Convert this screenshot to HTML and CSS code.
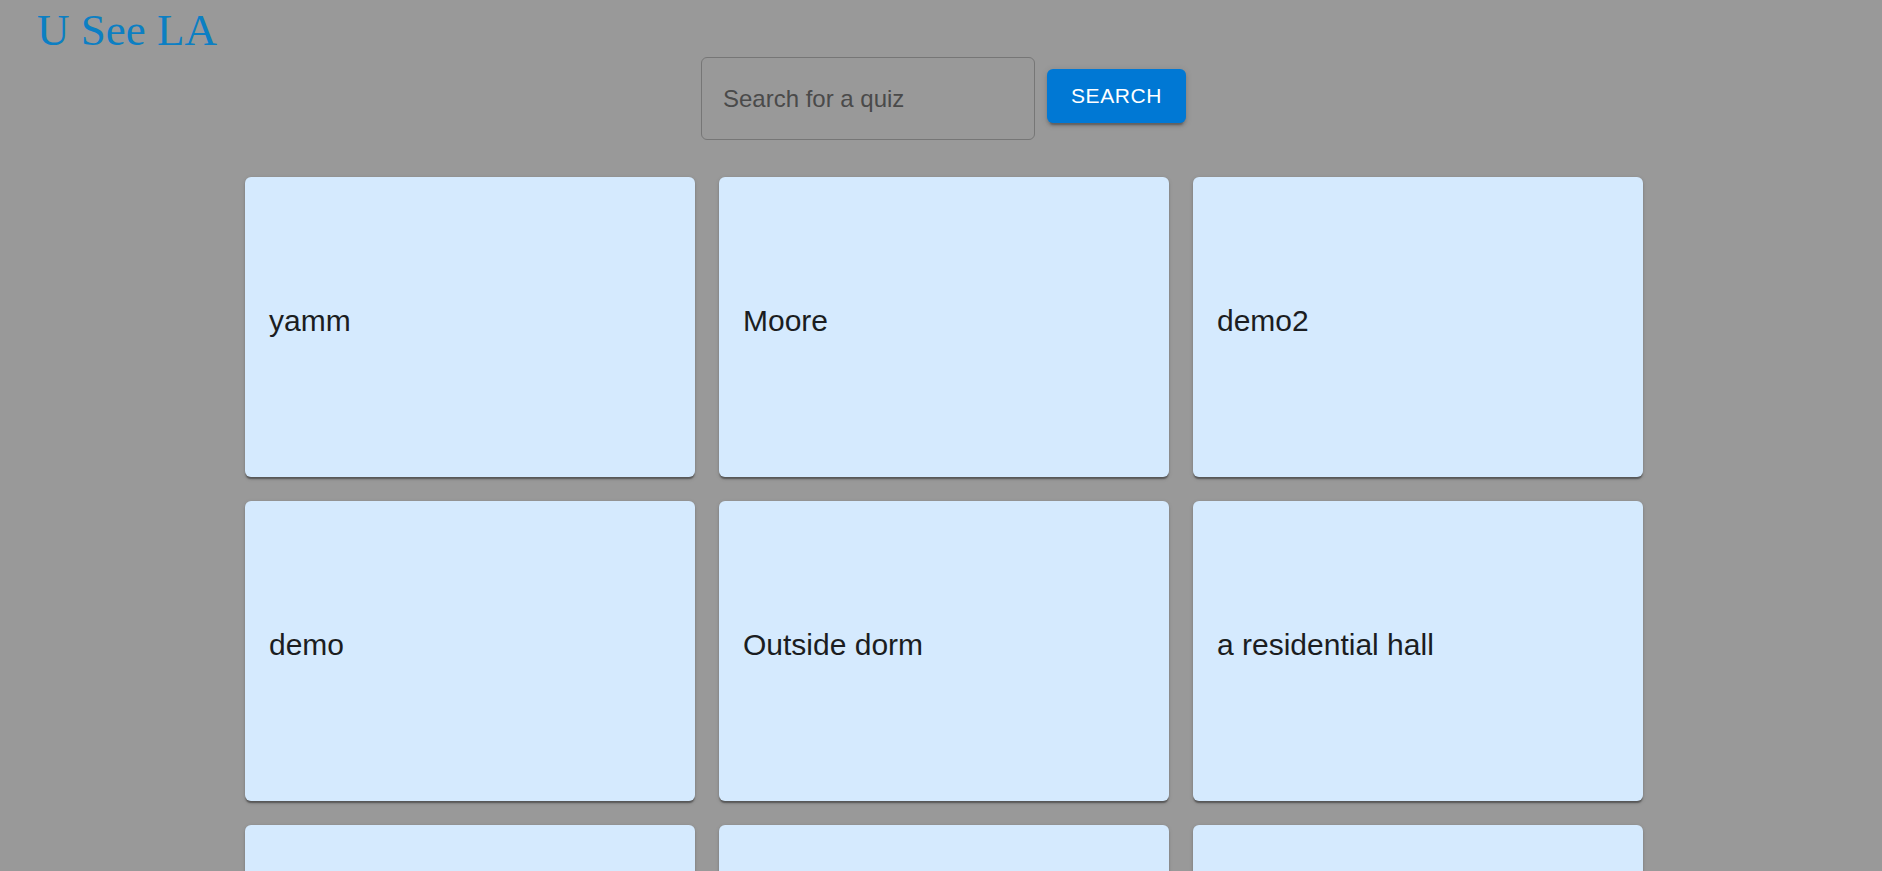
FILE: index.html
```html
<!DOCTYPE html>
<html lang="en">
<head>
<meta charset="utf-8">
<title>U See LA</title>
<link rel="stylesheet" href="styles.css">
</head>
<body>
<header class="header">
  <h1 class="brand">U See LA</h1>
</header>
<main class="main">
  <form class="search-row" onsubmit="return false;">
    <input class="search-input" type="text" placeholder="Search for a quiz">
    <button class="search-btn" type="submit">SEARCH</button>
  </form>
  <div class="grid">
    <div class="card"><span class="card-title">yamm</span></div>
    <div class="card"><span class="card-title">Moore</span></div>
    <div class="card"><span class="card-title">demo2</span></div>
    <div class="card"><span class="card-title">demo</span></div>
    <div class="card"><span class="card-title">Outside dorm</span></div>
    <div class="card"><span class="card-title">a residential hall</span></div>
    <div class="card"></div>
    <div class="card"></div>
    <div class="card"></div>
  </div>
</main>
</body>
</html>
```

FILE: styles.css
```css
html, body {
  margin: 0;
  padding: 0;
  background: #999999;
}

body {
  font-family: "Liberation Sans", Arial, sans-serif;
}

.header {
  padding: 3px 0 0 37px;
  height: 54px;
}

.brand {
  margin: 0;
  font-family: "Liberation Serif", "Times New Roman", serif;
  font-weight: 400;
  font-size: 45px;
  line-height: 55px;
  color: #0c7fc3;
}

.main {
  display: flex;
  flex-direction: column;
  align-items: center;
}

.search-row {
  display: flex;
  align-items: flex-start;
  gap: 12px;
  margin: 0 0 0 5px;
}

.search-input {
  box-sizing: border-box;
  width: 334px;
  height: 83px;
  padding: 0 21px;
  border: 1.5px solid #767676;
  border-radius: 6px;
  background: transparent;
  font-family: "Liberation Sans", Arial, sans-serif;
  font-size: 24px;
  color: #222;
  outline: none;
}

.search-input::placeholder {
  color: #4a4a4a;
  opacity: 1;
}

.search-btn {
  box-sizing: border-box;
  margin-top: 12px;
  height: 54px;
  padding: 0 24px;
  border: none;
  border-radius: 6px;
  background: #0078d4;
  color: #ffffff;
  font-family: "Liberation Sans", Arial, sans-serif;
  font-size: 21px;
  font-weight: 400;
  letter-spacing: 0.6px;
  box-shadow: 0 4.5px 1.5px -3px rgba(0,0,0,0.2), 0 3px 3px 0 rgba(0,0,0,0.14), 0 1.5px 7.5px 0 rgba(0,0,0,0.12);
  cursor: pointer;
}

.grid {
  display: grid;
  grid-template-columns: repeat(3, 450px);
  grid-auto-rows: 300px;
  gap: 24px;
  margin: 37px 0 0 6px;
}

.card {
  box-sizing: border-box;
  display: flex;
  align-items: center;
  padding: 0 24px 12px;
  background: #d5eafe;
  border-radius: 6px;
  box-shadow: 0 3px 1.5px -1.5px rgba(0,0,0,0.25), 0 1.5px 1.5px 0 rgba(0,0,0,0.16), 0 1.5px 4.5px 0 rgba(0,0,0,0.12);
}

.card-title {
  font-size: 30px;
  line-height: 1.2;
  color: #1b1d21;
}
```
